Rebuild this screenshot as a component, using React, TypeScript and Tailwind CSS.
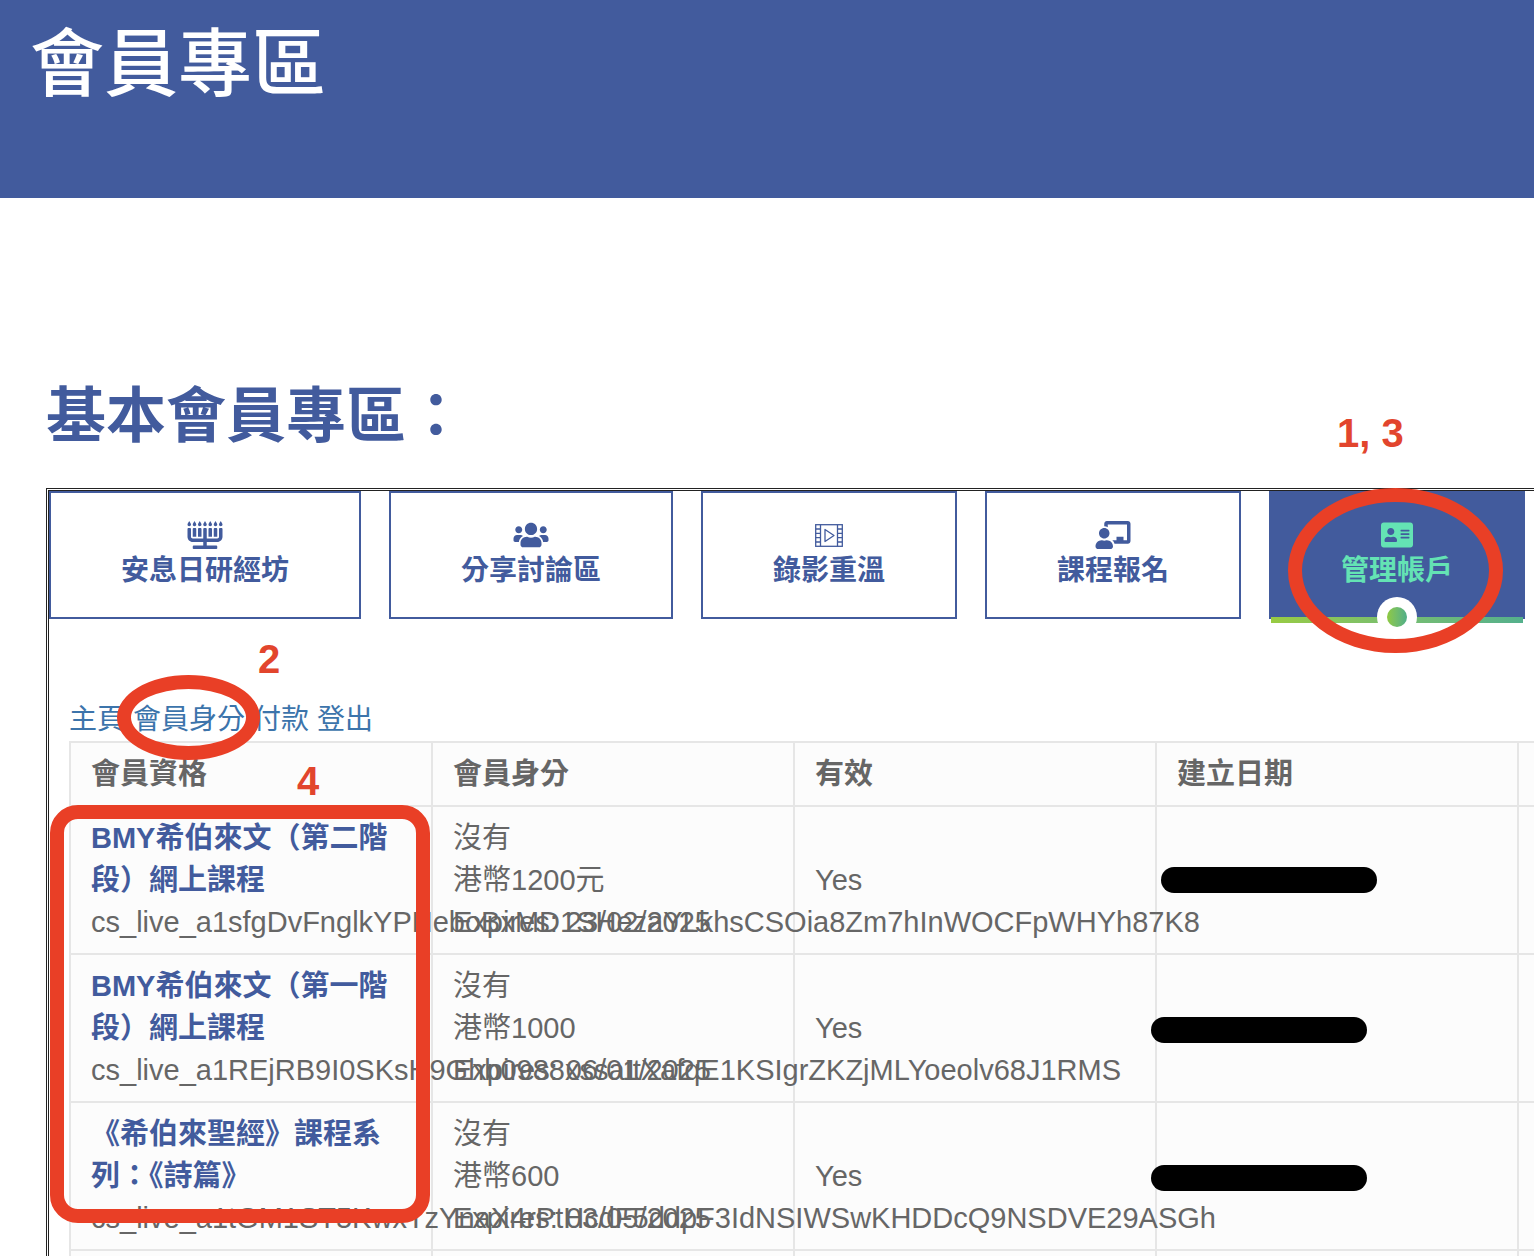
import React from 'react'
import { FaAddressCard, FaChalkboardTeacher, FaMenorah, FaUsers } from 'react-icons/fa'

// Thin outlined film strip with a play button
function FilmIcon({ className }: { className?: string }) {
    return (
        <svg viewBox="0 0 28 23" fill="none" stroke="currentColor" strokeWidth="1.3" className={className} aria-hidden="true">
            <rect x="0.7" y="0.7" width="26.6" height="21.6" />
            <path d="M5.5 0.7v21.6M22.5 0.7v21.6" />
            <path d="M0.7 5h4.8M0.7 9.3h4.8M0.7 13.7h4.8M0.7 18h4.8M22.5 5h4.8M22.5 9.3h4.8M22.5 13.7h4.8M22.5 18h4.8" />
            <path d="M10 5.5l9 6-9 6z" strokeLinejoin="round" />
        </svg>
    )
}

const tabs = [
    { label: '安息日研經坊', icon: <FaMenorah className="h-7 w-9" /> },
    { label: '分享討論區', icon: <FaUsers className="h-7 w-9" /> },
    { label: '錄影重溫', icon: <FilmIcon className="h-[23px] w-7" /> },
    { label: '課程報名', icon: <FaChalkboardTeacher className="h-7 w-9" /> },
    { label: '管理帳戶', icon: <FaAddressCard className="h-8 w-8" />, active: true },
]

const links = ['主頁', '會員身分', '付款', '登出']

const rows = [
    {
        title: ['BMY希伯來文（第二階', '段）網上課程'],
        session: 'cs_live_a1sfgDvFnglkYPHeboBxMD1SHezaYLkhsCSOia8Zm7hInWOCFpWHYh87K8',
        price: '港幣1200元',
        expires: '23/02/2025',
        bar: 'left-1',
    },
    {
        title: ['BMY希伯來文（第一階', '段）網上課程'],
        session: 'cs_live_a1REjRB9I0SKsH9Ghb0988xssaItXafqE1KSIgrZKZjMLYoeolv68J1RMS',
        price: '港幣1000',
        expires: '06/01/2025',
        bar: '-left-1.5 mt-0.5',
    },
    {
        title: ['《希伯來聖經》課程系', '列：《詩篇》'],
        session: 'cs_live_a1tGM1ST5KwxTzYnaX4rPtHcdF5ddpF3IdNSIWSwKHDDcQ9NSDVE29ASGh',
        price: '港幣600',
        expires: '03/05/2025',
        bar: '-left-1.5 mt-0.5',
    },
]

const cell = 'relative border-2 border-[#e6e6e6] px-5 py-2.5 text-left align-middle'
const mark = 'pointer-events-none absolute z-20 border-[14px] border-[#e93f26]'
const step = 'absolute z-20 text-[40px] leading-10 font-bold whitespace-nowrap text-[#e2452d]'

export default function App() {
    return (
        <div
            lang="zh-Hant"
            className="flex h-screen flex-col overflow-hidden bg-white font-['Liberation_Sans','Noto_Sans_CJK_TC',sans-serif] text-[#666]"
        >
            <header className="h-[198px] shrink-0 bg-[#425b9d] px-[30px] pt-4">
                <h1 className="text-[74px] leading-[98px] font-medium text-white">會員專區</h1>
            </header>

            <main className="flex flex-1 flex-col pt-[183px] pl-[46px]">
                <h2 className="text-[60px] leading-[72px] font-bold text-[#425b9d]">基本會員專區：</h2>

                <section className="mt-[35px] flex-1 border-t-[3px] border-l-[3px] border-double border-[#222]">
                    <div role="tablist" className="flex gap-7">
                        {tabs.map((tab) => (
                            <div key={tab.label} className="relative shrink-0">
                                <button
                                    type="button"
                                    role="tab"
                                    aria-selected={!!tab.active}
                                    className={`flex flex-col items-center border-2 border-[#425b9d] px-[70px] py-[26px] text-[28px] leading-10 font-bold ${
                                        tab.active ? 'bg-[#425b9d] text-[#64e3b4]' : 'bg-white text-[#425b9d]'
                                    }`}
                                >
                                    <span className="flex h-8 items-center">{tab.icon}</span>
                                    {tab.label}
                                </button>
                                {tab.active && (
                                    <>
                                        {/* underline and dot of the selected tab */}
                                        <span className="absolute inset-x-0.5 -bottom-1 h-1.5 bg-linear-to-r from-[#98cb42] to-[#54b08c]" />
                                        <span className="absolute -bottom-[18px] left-1/2 flex size-10 -translate-x-1/2 items-center justify-center rounded-full bg-white">
                                            <span className="size-5 rounded-full bg-linear-to-r from-[#8fc93f] to-[#4fae87]" />
                                        </span>
                                        <span className={`${mark} -top-[3px] left-[19px] h-[165px] w-[215px] rounded-[50%]`} />
                                        <span className={`${step} -top-[78px] left-[68px]`}>1, 3</span>
                                    </>
                                )}
                            </div>
                        ))}
                    </div>

                    <div className="mt-20 pl-5 text-[28px]">
                        <nav className="flex gap-2 leading-[42px] text-[#3c74ab]">
                            {links.map((link) => (
                                <span key={link} className="relative">
                                    <a href="#">{link}</a>
                                    {link === '會員身分' && (
                                        <>
                                            <span className={`${mark} -top-6 -left-4 h-[85px] w-[143px] rounded-[50%]`} />
                                            <span className={`${step} -top-[60px] left-[125px]`}>2</span>
                                        </>
                                    )}
                                </span>
                            ))}
                        </nav>

                        <div className="relative">
                            <table className="w-[1812px] table-fixed border-collapse bg-[#fcfcfc] text-[29px] leading-[42px]">
                                <thead>
                                    <tr>
                                        <th className={cell}>會員資格</th>
                                        <th className={cell}>會員身分</th>
                                        <th className={cell}>有效</th>
                                        <th className={cell}>建立日期</th>
                                        <th className={cell} />
                                    </tr>
                                </thead>
                                <tbody>
                                    {rows.map((row) => (
                                        <tr key={row.session}>
                                            <td className={`${cell} whitespace-nowrap`}>
                                                <a href="#" className="font-bold text-[#425b9d]">
                                                    {row.title[0]}
                                                    <br />
                                                    {row.title[1]}
                                                </a>
                                                <div>{row.session}</div>
                                            </td>
                                            <td className={cell}>
                                                <div>沒有</div>
                                                <div>{row.price}</div>
                                                <div>Expires: {row.expires}</div>
                                            </td>
                                            <td className={cell}>Yes</td>
                                            <td className={cell}>
                                                <span className={`absolute top-1/2 h-[26px] w-[216px] -translate-y-1/2 rounded-full bg-black ${row.bar}`} />
                                            </td>
                                            <td className={cell} />
                                        </tr>
                                    ))}
                                    <tr>
                                        <td className={cell} />
                                        <td className={cell} />
                                        <td className={cell} />
                                        <td className={cell} />
                                        <td className={cell} />
                                    </tr>
                                </tbody>
                            </table>
                            <span className={`${mark} top-16 -left-[19px] h-[418px] w-[380px] rounded-[28px]`} />
                            <span className={`${step} top-5 left-[228px]`}>4</span>
                        </div>
                    </div>
                </section>
            </main>
        </div>
    )
}
